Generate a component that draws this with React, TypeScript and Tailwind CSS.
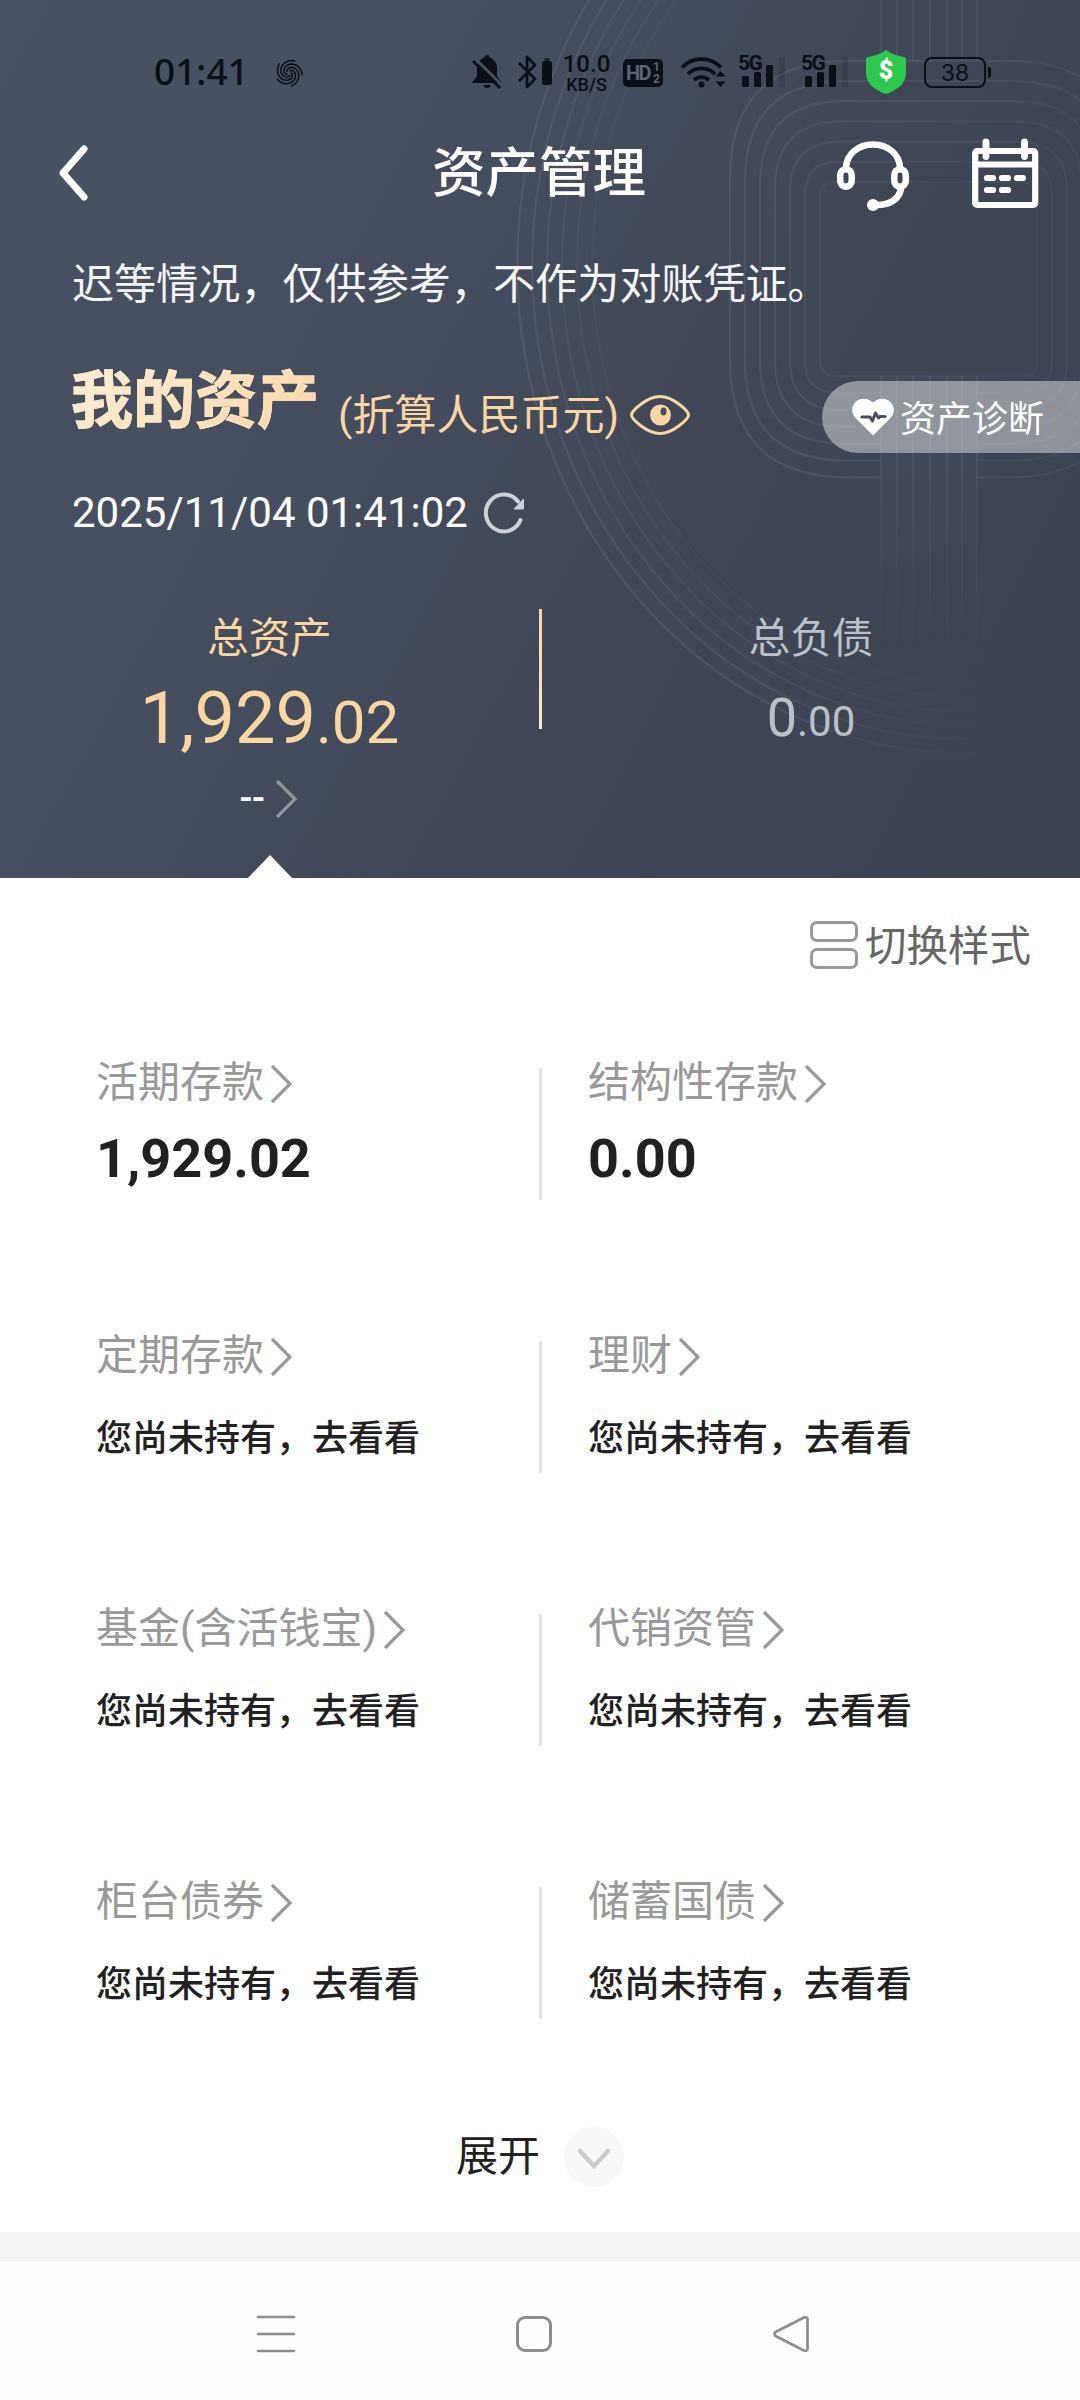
import React from "react";

const INK = "#0b0f17";

function HeaderBackdrop() {
  const squares = [0, 1, 2, 3, 4, 5, 6];
  const bars = [881, 897, 913, 930, 947, 962, 977];
  const arcs = [0, 1, 2, 3, 4, 5];
  return (
    <svg className="absolute inset-0" width="1080" height="878" viewBox="0 0 1080 878" fill="none">
      <defs>
        <linearGradient id="arcFade" gradientUnits="userSpaceOnUse" x1="760" y1="0" x2="1000" y2="0">
          <stop offset="0" stopColor="#fff" stopOpacity="0.07" />
          <stop offset="1" stopColor="#fff" stopOpacity="0" />
        </linearGradient>
        <linearGradient id="squareFade" gradientUnits="userSpaceOnUse" x1="800" y1="0" x2="1080" y2="0">
          <stop offset="0" stopColor="#fff" stopOpacity="0.07" />
          <stop offset="1" stopColor="#fff" stopOpacity="0.04" />
        </linearGradient>
        <linearGradient id="barFade" gradientUnits="userSpaceOnUse" x1="0" y1="440" x2="0" y2="670">
          <stop offset="0" stopColor="#fff" stopOpacity="0.055" />
          <stop offset="1" stopColor="#fff" stopOpacity="0" />
        </linearGradient>
      </defs>
      <g stroke="url(#arcFade)" strokeWidth="2.2">
        {arcs.map((i) => (
          <path
            key={i}
            opacity={1 - i * 0.13}
            d={`M965.1 ${-223 + i * 14} A${448 - i * 15} ${488 - i * 14} 0 0 0 965 ${753 - i * 14} H1040`}
          />
        ))}
      </g>
      <g stroke="url(#squareFade)" strokeWidth="2.2">
        {squares.map((i) => {
          const l = 820 - i * 15;
          const r = 1037 + i * 15;
          const t = 182 - i * 20.2;
          const b = 376 + i * 16.9;
          const q = 16 + i * 17;
          return (
            <path
              key={i}
              opacity={0.6 + i * 0.066}
              d={`M${i ? 881 : 929} ${b} H${l + q} Q${l} ${b} ${l} ${b - q} V${t + q} Q${l} ${t} ${l + q} ${t} H${r - q} Q${r} ${t} ${r} ${t + q} V${b - q} Q${r} ${b} ${r - q} ${b} H${i ? 977 : 929}`}
            />
          );
        })}
      </g>
      <g fill="#fff" fillOpacity="0.05">
        {bars.map((x) => (
          <rect key={x} x={x - 1.1} y="0" width="2.2" height="61" />
        ))}
      </g>
      <g fill="url(#barFade)">
        {bars.map((x) => (
          <rect key={x} x={x - 1.1} y="376" width="2.2" height="294" />
        ))}
        <rect x="881" y="376" width="96" height="294" opacity="0.3" />
      </g>
    </svg>
  );
}

/* Points of one spiral arm, from the core outwards. */
function spiralArm(start: number) {
  const points: string[] = [];
  for (let i = 0; i <= 14; i++) {
    const t = i / 14;
    const a = start + t * 3.9;
    const r = 2.5 + t * 10.8;
    points.push(`${(14 + r * Math.cos(a)).toFixed(1)},${(25 + r * Math.sin(a)).toFixed(1)}`);
  }
  return points.join(" ");
}

function Swirl() {
  return (
    <svg className="ml-[28px]" width="29" height="48" fill="none" stroke={INK} strokeWidth="1.5" strokeLinecap="round">
      {[0, 1.257, 2.513, 3.77, 5.027].map((s) => (
        <polyline key={s} points={spiralArm(s)} />
      ))}
    </svg>
  );
}

function Signal() {
  return (
    <div className="relative h-12 w-[50px]">
      <span className="absolute left-0 top-[4px] font-['Roboto'] text-[21px] font-bold leading-[22px] tracking-[-1.5px]">5G</span>
      <svg width="50" height="48" fill={INK}>
        <rect x="4" y="28" width="7" height="11" rx="1.5" />
        <rect x="16" y="24" width="7" height="15" rx="1.5" />
        <rect x="28" y="17" width="7" height="22" rx="1.5" />
        <rect x="41" y="9" width="6" height="30" rx="1.5" opacity="0.14" />
      </svg>
    </div>
  );
}

function StatusBar() {
  return (
    <div className="flex h-24 items-start pt-12 text-[#0b0f17]">
      <span className="ml-[154px] mt-[-2px] w-[93px] whitespace-nowrap font-['Noto_Sans'] text-[37px] font-medium leading-[50px]">01:41</span>
      <Swirl />
      <svg className="ml-[167px]" width="32" height="48">
        <path d="M16 7c1.500 0 2.500 1 2.700 2.500C23 11 26 15 26 20v8l5 7H1l5-7v-8c0-5 3-9 7.300-10.500C13.500 8 14.500 7 16 7z" fill={INK} />
        <path d="M12.500 37h7a3.500 3 0 0 1-7 0z" fill={INK} />
        <path d="M4 10.500 32 38" stroke="#475060" strokeWidth="3" />
        <path d="M2 13 29 40" stroke={INK} strokeWidth="2.600" />
      </svg>
      <svg className="ml-[14px]" width="36" height="48" fill="none">
        <path d="M2 15 18 31l-8 8V9l8 8L2 33" stroke={INK} strokeWidth="2.800" strokeLinejoin="round" />
        <rect x="25" y="13" width="10" height="24" rx="2.500" fill={INK} />
        <path d="M27.500 11.500h5" stroke={INK} strokeWidth="2" />
      </svg>
      <div className="ml-[9px] flex w-[49px] flex-col items-center pt-[5px] font-['Roboto'] font-medium">
        <span className="text-[24px] leading-[22px]">10.0</span>
        <span className="mt-px text-[18px] leading-[18px]">KB/S</span>
      </div>
      <div className="ml-[12px] mt-[11px] flex h-7 w-10 items-center justify-center rounded-[5px] bg-[#0b0f17] font-['Roboto'] font-bold text-[#5a6474]">
        <span className="text-[20px] leading-7 tracking-[-1.5px]">HD</span>
        <span className="ml-[3px] flex flex-col text-[12px] leading-[12px]">
          <span>1</span>
          <span>2</span>
        </span>
      </div>
      <svg className="ml-[17px]" width="47" height="48" fill="none" stroke={INK} strokeWidth="3.800">
        <path d="M2 19.500a27 27 0 0 1 39 0" />
        <path d="M8 26a19 19 0 0 1 27 0" />
        <path d="M14 32a11 11 0 0 1 15 0" />
        <circle cx="21.500" cy="36.500" r="3" fill={INK} stroke="none" />
        <path d="M36 26.500 41 21l5 5.500zM36 31.500h10L41 37z" transform="translate(-.5 2)" fill={INK} stroke="none" />
      </svg>
      <div className="ml-[11px]">
        <Signal />
      </div>
      <div className="ml-[13px]">
        <Signal />
      </div>
      <div className="relative ml-[15px] flex h-12 w-10 items-center justify-center">
        <svg className="absolute inset-0" width="40" height="48">
          <path d="M20 2C26 6 32 8 38 9c1.500.3 2 1 2 2.500V25c0 11-9 17-20 21C9 42 0 36 0 25V11.500C0 10 .5 9.300 2 9 8 8 14 6 20 2z" fill="#2dc84d" />
        </svg>
        <span className="relative mt-[-3px] font-['Roboto'] text-[25px] font-black leading-none text-white">$</span>
      </div>
      <div className="ml-[18px] mt-[9px] flex items-center gap-[2px]">
        <div className="flex h-[31px] w-[62px] items-center justify-center rounded-[8px] border-[2.500px] border-[#0b0f17] font-['Inter'] text-[23px] leading-[24px]">
          38
        </div>
        <div className="h-[11px] w-[3px] rounded-r-sm bg-[#0b0f17]" />
      </div>
    </div>
  );
}

function NavBar() {
  return (
    <div className="flex h-[156px] items-center text-white">
      <svg className="ml-[54px] mt-[-2px]" width="36" height="64" fill="none" stroke="#fff" strokeWidth="7" strokeLinecap="round" strokeLinejoin="round">
        <path d="M30 8 9 32 30 56" />
      </svg>
      <h1 className="ml-[342px] w-[214px] whitespace-nowrap text-center text-[53.500px] font-medium leading-[60px]">资产管理</h1>
      <svg className="ml-[189px] mt-[-1px]" width="76" height="76" viewBox="835 135 76 76" fill="none" stroke="#fff" strokeWidth="6.500" strokeLinecap="round">
        <path d="M846 166c1-13 12-22.500 27-22.500s26 9.500 27 22.500" />
        <rect x="840.200" y="168.200" width="11.500" height="17.500" rx="5.700" />
        <rect x="894.300" y="168.200" width="11.500" height="17.500" rx="5.700" />
        <path d="M901 188c-2 10-11 16-24 16" />
        <circle cx="873" cy="204" r="6" fill="#fff" stroke="none" />
      </svg>
      <svg className="ml-[59px] mt-[-1px]" width="70" height="76" viewBox="970 135 70 76" fill="none" stroke="#fff" strokeWidth="6.200" strokeLinecap="round">
        <rect x="975.200" y="150" width="60" height="54" rx="2" />
        <path d="M976 163.500h58" strokeLinecap="butt" />
        <path d="M986 141v14.500M1024.500 141v14.500" strokeWidth="6.800" />
        <path d="M987 177h6M1002 177h6M1017 177h6M987 189h6M1002 189h6" />
      </svg>
    </div>
  );
}

function Arrow({ className = "", color = "#999999" }: { className?: string; color?: string }) {
  return (
    <svg className={className} width="24" height="42" fill="none" stroke={color} strokeWidth="3.200">
      <path d="M2 3 20 21 2 39" />
    </svg>
  );
}

function AssetHeader() {
  return (
    <>
      <p className="ml-[72px] mt-[-1px] h-[68px] whitespace-nowrap text-[42.100px] leading-[68px] text-[#f4f5f7]">迟等情况，仅供参考，不作为对账凭证。</p>
      <div className="mt-[47px] flex h-[90px] items-start">
        <h2 className="ml-[71px] w-[250px] whitespace-nowrap bg-linear-135 from-[#ffefd9] to-[#fcd6a4] bg-clip-text text-[62px] font-bold leading-[72px] text-transparent [-webkit-text-stroke:1px_#fde2be]">
          我的资产
        </h2>
        <span className="ml-[17px] mt-[25px] w-[281px] whitespace-nowrap text-[42px] leading-[50px] text-[#fbd5a2]">(折算人民币元)</span>
        <svg className="ml-[10px] mt-[27px]" width="62" height="44" fill="none" stroke="#fbd5a2" strokeWidth="3">
          <path d="M2.500 22C2.500 18 18 3.500 31 3.500S59.500 18 59.500 22 44 40.500 31 40.500 2.500 26 2.500 22z" />
          <circle cx="31.500" cy="22" r="10.500" fill="#fbd5a2" stroke="none" />
          <ellipse cx="34.500" cy="18.500" rx="3" ry="4" fill="#454d5d" stroke="none" />
        </svg>
        <div className="ml-auto mt-[15px] flex h-[72px] w-[258px] items-center rounded-l-full bg-white/42 text-white">
          <svg className="ml-[29px]" width="44" height="38">
            <path d="M22 4.500C27-.5 35-.5 39.500 4c4.500 5 4.500 11 0 16L22 37.500 4.500 20C0 15 0 9 4.500 4 9-.5 17-.5 22 4.500z" fill="#fff" />
            <path d="M11 19h8l2.500 4 3-8 3 5 1.500-1.500h5" fill="none" stroke="#48505f" strokeWidth="3" strokeLinejoin="round" strokeLinecap="round" />
          </svg>
          <span className="ml-[5px] mt-[6px] whitespace-nowrap text-[36px] leading-[40px]">资产诊断</span>
        </div>
      </div>
      <div className="mt-[30px] flex h-[54px] items-center">
        <span className="ml-[72px] w-[396px] whitespace-nowrap text-[42px] leading-[50px] text-white">2025/11/04 01:41:02</span>
        <svg className="ml-[15px]" width="44" height="46" fill="none">
          <path d="M35 11.500A18 18.500 0 1 0 37.500 30" stroke="#cdd2da" strokeWidth="4" strokeLinecap="round" />
          <path d="M40.500 9v10H31z" fill="#cdd2da" stroke="#cdd2da" strokeLinejoin="round" />
        </svg>
      </div>
    </>
  );
}

function Totals() {
  return (
    <div className="mt-[68px] flex items-start">
      <div className="flex w-[539px] flex-col items-center text-[#fbd5a2]">
        <span className="mt-[6px] text-[41.500px] leading-[50px]">总资产</span>
        <span className="mt-[15px] text-[72px] leading-[80px]">
          1,929<span className="text-[60px]">.02</span>
        </span>
        <div className="mt-[9px] flex h-[54px] w-[60px] items-center text-white">
          <span className="mt-[-2px] w-[23px] whitespace-nowrap text-[38px] font-medium leading-[50px] tracking-[-0.5px]">--</span>
          <Arrow className="ml-[12px] shrink-0" color="#90949b" />
        </div>
        <svg className="mt-[29px]" width="46" height="24" fill="#fff">
          <path d="M0 24 23 0l23 24z" />
        </svg>
      </div>
      <div className="mt-[1px] h-[120px] w-[3px] bg-linear-to-b from-[#fcd6a4] to-[#ffe9cc]" />
      <div className="flex w-[538px] flex-col items-center text-[#bbc0c9]">
        <span className="mt-[6px] text-[41.500px] leading-[50px]">总负债</span>
        <span className="mt-[24px] text-[54px] leading-[60px]">
          0<span className="text-[42px]">.00</span>
        </span>
      </div>
    </div>
  );
}

function Cell({ label, value }: { label: string; value?: string }) {
  return (
    <div className="flex flex-1 flex-col">
      <div className="flex h-[50px] items-center text-[42px] leading-[50px] text-[#999999]">
        <span className="whitespace-nowrap">{label}</span>
        <Arrow className="ml-[6px] mt-[2px]" />
      </div>
      {value ? (
        <span className="mt-[21px] text-[54px] font-bold leading-[60px] text-[#212121]">{value}</span>
      ) : (
        <span className="mt-[35px] whitespace-nowrap text-[36px] font-medium leading-[46px] text-[#212121]">您尚未持有，去看看</span>
      )}
    </div>
  );
}

const rows: [string, string | undefined, string, string | undefined][] = [
  ["活期存款", "1,929.02", "结构性存款", "0.00"],
  ["定期存款", undefined, "理财", undefined],
  ["基金(含活钱宝)", undefined, "代销资管", undefined],
  ["柜台债券", undefined, "储蓄国债", undefined],
];

export default function App() {
  return (
    <div className="h-[2400px] w-[1080px] overflow-hidden bg-white font-['Roboto','Noto_Sans_CJK_SC',sans-serif]">
      <header className="relative h-[878px] overflow-hidden bg-[linear-gradient(118deg,#4a5363_0%,#454e5e_35%,#3f4757_62%,#3b4351_100%)]">
        <HeaderBackdrop />
        <div className="relative">
          <StatusBar />
          <NavBar />
          <AssetHeader />
          <Totals />
        </div>
      </header>

      <div className="flex h-[135px] items-center justify-end pr-[49px]">
        <div className="mt-[-1px] flex w-12 flex-col gap-[6px]">
          <div className="h-[21px] rounded-[7px] border-[3px] border-[#999999]" />
          <div className="h-[21px] rounded-[7px] border-[3px] border-[#999999]" />
        </div>
        <span className="ml-[7px] mt-[2px] whitespace-nowrap text-[41.500px] leading-[50px] text-[#666666]">切换样式</span>
      </div>

      <main>
        {rows.map(([l, lv, r, rv]) => (
          <section key={l} className="flex h-[273px] items-start pl-[96px] pt-[45px]">
            <div className="w-[443px]">
              <Cell label={l} value={lv} />
            </div>
            <div className="mt-[10px] h-[132px] w-[3px] shrink-0 bg-[#e4e4e4]" />
            <div className="ml-[46px] flex-1">
              <Cell label={r} value={rv} />
            </div>
          </section>
        ))}
      </main>

      <div className="flex h-[127px] items-center pb-[23px] pl-[456px]">
        <span className="text-[42px] leading-[50px] text-[#212121]">展开</span>
        <div className="ml-[24px] flex size-[60px] items-center justify-center rounded-full bg-[#f8f8f8]">
          <svg className="mt-[4px]" width="36" height="26" fill="none" stroke="#cccccc" strokeWidth="4.500" strokeLinecap="round">
            <path d="M4 5 18 20 32 5" />
          </svg>
        </div>
      </div>
      <div className="h-[30px] bg-[#f3f3f3]" />
      <footer className="flex h-[143px] items-center bg-[#fefefe]">
        <svg className="ml-[256px]" width="40" height="40" stroke="#8d8d8d" strokeWidth="2.600" strokeLinecap="round">
          <path d="M2 3h36M2 20h36M2 37h36" />
        </svg>
        <div className="ml-[220px] size-[36px] rounded-[9px] border-[3px] border-[#8d8d8d]" />
        <svg className="ml-[221px]" width="38" height="38" fill="none" stroke="#8d8d8d" strokeWidth="2.700" strokeLinejoin="round">
          <path d="M2.500 17 31 2.500q3-1 3.500 1.500V34q-.5 2.500-3.500 1.500L2.500 21q-2-2 0-4z" />
        </svg>
      </footer>
    </div>
  );
}
